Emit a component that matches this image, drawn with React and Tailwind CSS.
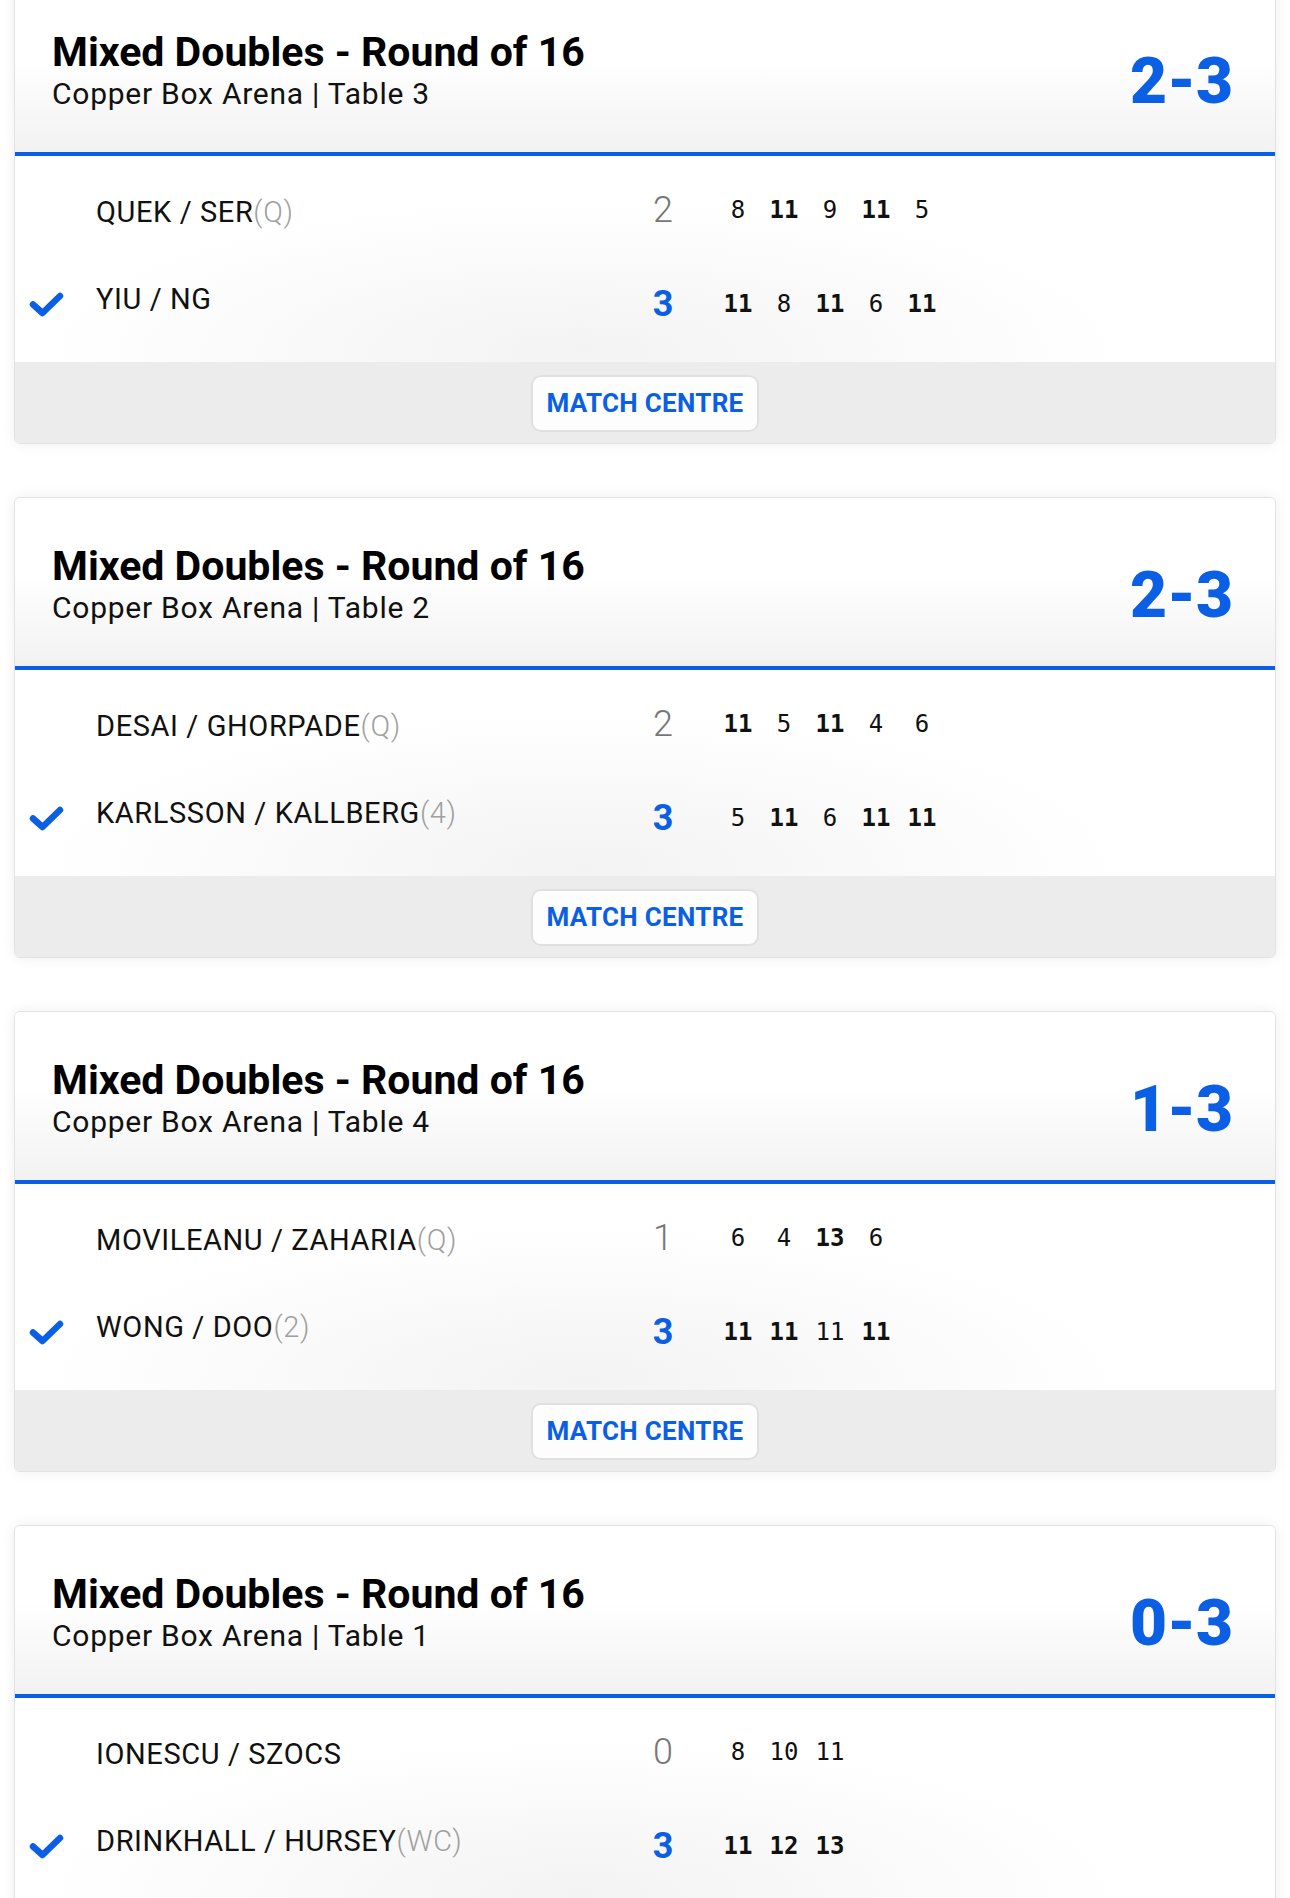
import React from 'react';

const BLUE = 'text-[#0a5fe4]';

const matches = [
  {
    table: 3,
    teams: [
      { name: 'QUEK / SER', seed: 'Q', sets: 2, games: [8, 11, 9, 11, 5] },
      { name: 'YIU / NG', seed: null, sets: 3, games: [11, 8, 11, 6, 11] },
    ],
  },
  {
    table: 2,
    teams: [
      { name: 'DESAI / GHORPADE', seed: 'Q', sets: 2, games: [11, 5, 11, 4, 6] },
      { name: 'KARLSSON / KALLBERG', seed: '4', sets: 3, games: [5, 11, 6, 11, 11] },
    ],
  },
  {
    table: 4,
    teams: [
      { name: 'MOVILEANU / ZAHARIA', seed: 'Q', sets: 1, games: [6, 4, 13, 6] },
      { name: 'WONG / DOO', seed: '2', sets: 3, games: [11, 11, 11, 11] },
    ],
  },
  {
    table: 1,
    teams: [
      { name: 'IONESCU / SZOCS', seed: null, sets: 0, games: [8, 10, 11] },
      { name: 'DRINKHALL / HURSEY', seed: 'WC', sets: 3, games: [11, 12, 13] },
    ],
  },
];

function Check() {
  return (
    <svg width="35" height="25" viewBox="0 0 35 25">
      <polyline
        points="4,12.5 13.5,21 31,4"
        fill="none"
        stroke="#0a5fe4"
        strokeWidth="6.5"
        strokeLinecap="round"
        strokeLinejoin="round"
      />
    </svg>
  );
}

function TeamRow({ team, opponent, winner }) {
  return (
    <div className="flex items-center h-[94px]">
      <div className="w-[81px] pl-[14px] flex items-center">{winner && <Check />}</div>
      <div
        className={`w-[547px] text-[29px] tracking-[0.6px] text-[#111] leading-none ${
          winner ? 'pb-[10px]' : 'pt-[4px]'
        }`}
      >
        {team.name}
        {team.seed && <span className="text-[#a0a0a0] font-light">({team.seed})</span>}
      </div>
      <div
        className={`w-[40px] text-center text-[36px] leading-none ${
          winner ? `font-bold ${BLUE}` : 'font-light text-[#777]'
        }`}
      >
        {team.sets}
      </div>
      <div className="ml-[32px] flex font-['DejaVu_Sans_Mono',monospace] text-[24px] text-[#111] leading-none">
        {team.games.map((g, i) => (
          <span key={i} className={`w-[46px] text-center ${g > opponent.games[i] ? 'font-bold' : ''}`}>
            {g}
          </span>
        ))}
      </div>
    </div>
  );
}

function MatchCard({ match }) {
  const [a, b] = match.teams;
  return (
    <div className="rounded-[6px] border border-[#e2e2e2] bg-white overflow-hidden shadow-[0_0_14px_rgba(0,0,0,0.07)]">
      {/* header */}
      <div className="h-[168px] flex justify-between items-start pt-[45px] pl-[37px] pr-[42px] bg-[linear-gradient(to_bottom,#ffffff_45%,#f3f2f3)]">
        <div>
          <h2 className="text-[41px] leading-[46px] font-bold text-black">Mixed Doubles - Round of 16</h2>
          <p className="text-[30px] leading-[36px] tracking-[0.75px] text-[#111] mt-[1px]">
            Copper Box Arena | Table {match.table}
          </p>
        </div>
        <div className={`mt-[21px] text-[64px] leading-none font-black ${BLUE}`}>
          {a.sets}-{b.sets}
        </div>
      </div>
      <div className="h-[4px] bg-[#0a5fe4]" />

      {/* teams */}
      <div className="h-[206px] pt-[7px] bg-[radial-gradient(ellipse_at_45%_95%,#f4f3f4,#ffffff_55%)]">
        <TeamRow team={a} opponent={b} winner={a.sets > b.sets} />
        <TeamRow team={b} opponent={a} winner={b.sets > a.sets} />
      </div>

      {/* footer */}
      <div className="h-[81px] bg-[#ececec] flex justify-center pt-[13px]">
        <button className="h-[57px] w-[228px] rounded-[10px] border-2 border-[#e0e0e0] bg-[#fdfdfd] text-[26px] font-bold tracking-[0.3px] text-[#0a5fe4]">
          MATCH CENTRE
        </button>
      </div>
    </div>
  );
}

export default function App() {
  return (
    <div className="bg-white min-h-screen overflow-hidden font-['Roboto',sans-serif]">
      <div className="px-[14px] -mt-[17px] flex flex-col gap-[53px]">
        {matches.map((m) => (
          <MatchCard key={m.table} match={m} />
        ))}
      </div>
    </div>
  );
}
